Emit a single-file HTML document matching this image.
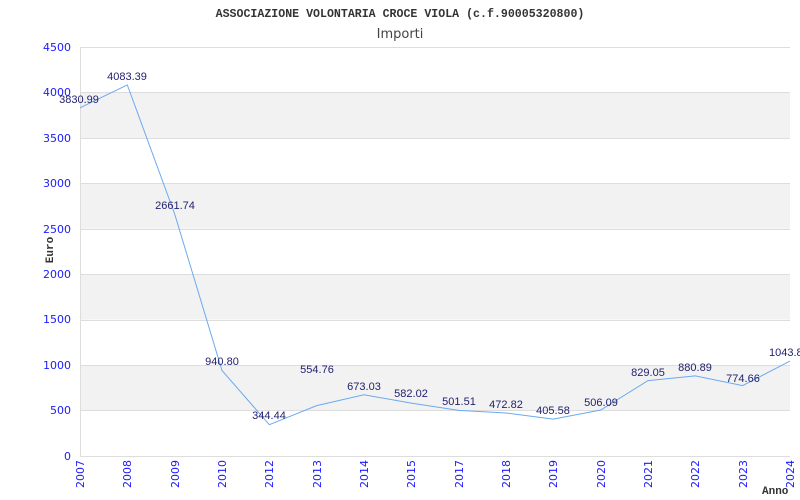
<!DOCTYPE html><html><head><meta charset="utf-8"><style>body{margin:0;background:#fff}svg{display:block}</style></head><body>
<svg width="800" height="500" xmlns="http://www.w3.org/2000/svg" font-family="Liberation Sans, sans-serif">
<rect width="800" height="500" fill="#fff"/>
<g fill="#f2f2f2"><rect x="80" y="92.4" width="710" height="45.4"/><rect x="80" y="183.3" width="710" height="45.4"/><rect x="80" y="274.2" width="710" height="45.4"/><rect x="80" y="365.1" width="710" height="45.4"/></g>
<g stroke="#ddd" stroke-width="1"><line x1="80" y1="47.5" x2="790" y2="47.5"/><line x1="80" y1="92.5" x2="790" y2="92.5"/><line x1="80" y1="138.5" x2="790" y2="138.5"/><line x1="80" y1="183.5" x2="790" y2="183.5"/><line x1="80" y1="229.5" x2="790" y2="229.5"/><line x1="80" y1="274.5" x2="790" y2="274.5"/><line x1="80" y1="320.5" x2="790" y2="320.5"/><line x1="80" y1="365.5" x2="790" y2="365.5"/><line x1="80" y1="410.5" x2="790" y2="410.5"/><line x1="80" y1="456.5" x2="790" y2="456.5"/><line x1="80.5" y1="47" x2="80.5" y2="457"/></g>
<text x="400" y="17" text-anchor="middle" font-family="Liberation Mono, monospace" font-weight="bold" font-size="11.6" fill="#333">ASSOCIAZIONE VOLONTARIA CROCE VIOLA (c.f.90005320800)</text>
<text x="400" y="38" text-anchor="middle" font-family="DejaVu Sans, sans-serif" font-size="13" fill="#444">Importi</text>
<g fill="#1a1aff" font-size="11" font-family="DejaVu Sans, sans-serif" text-anchor="end"><text x="71" y="51">4500</text><text x="71" y="96">4000</text><text x="71" y="142">3500</text><text x="71" y="187">3000</text><text x="71" y="233">2500</text><text x="71" y="278">2000</text><text x="71" y="323">1500</text><text x="71" y="369">1000</text><text x="71" y="414">500</text><text x="71" y="460">0</text></g>
<g fill="#1a1aff" font-size="11" font-family="DejaVu Sans, sans-serif" text-anchor="end">
<text transform="translate(84,460) rotate(-90)">2007</text><text transform="translate(131,460) rotate(-90)">2008</text><text transform="translate(179,460) rotate(-90)">2009</text><text transform="translate(226,460) rotate(-90)">2010</text><text transform="translate(273,460) rotate(-90)">2012</text><text transform="translate(321,460) rotate(-90)">2013</text><text transform="translate(368,460) rotate(-90)">2014</text><text transform="translate(415,460) rotate(-90)">2015</text><text transform="translate(463,460) rotate(-90)">2017</text><text transform="translate(510,460) rotate(-90)">2018</text><text transform="translate(557,460) rotate(-90)">2019</text><text transform="translate(605,460) rotate(-90)">2020</text><text transform="translate(652,460) rotate(-90)">2021</text><text transform="translate(699,460) rotate(-90)">2022</text><text transform="translate(747,460) rotate(-90)">2023</text><text transform="translate(794,460) rotate(-90)">2024</text></g>
<text transform="translate(53,250) rotate(-90)" text-anchor="middle" font-family="Liberation Mono, monospace" font-weight="bold" font-size="11" fill="#333">Euro</text>
<text x="762" y="494" font-family="Liberation Mono, monospace" font-weight="bold" font-size="11" fill="#333">Anno</text>
<polyline fill="none" stroke="#6aaaf0" stroke-width="1" points="80,107.8 127.3,84.9 174.7,214.1 222,370.5 269.3,424.7 316.7,405.6 364,394.8 411.3,403.1 458.7,410.4 506,413 553.3,419.1 600.7,410 648,380.6 695.3,375.9 742.7,385.6 790,361.1"/>
<g fill="#22226e" font-size="11" text-anchor="middle">
<text x="79" y="103">3830.99</text><text x="127" y="80">4083.39</text><text x="175" y="209">2661.74</text><text x="222" y="365">940.80</text><text x="269" y="419">344.44</text><text x="317" y="373">554.76</text><text x="364" y="390">673.03</text><text x="411" y="397">582.02</text><text x="459" y="405">501.51</text><text x="506" y="408">472.82</text><text x="553" y="414">405.58</text><text x="601" y="406">506.09</text><text x="648" y="376">829.05</text><text x="695" y="371">880.89</text><text x="743" y="382">774.66</text><text x="769" y="356" text-anchor="start">1043.8</text></g>
</svg></body></html>
